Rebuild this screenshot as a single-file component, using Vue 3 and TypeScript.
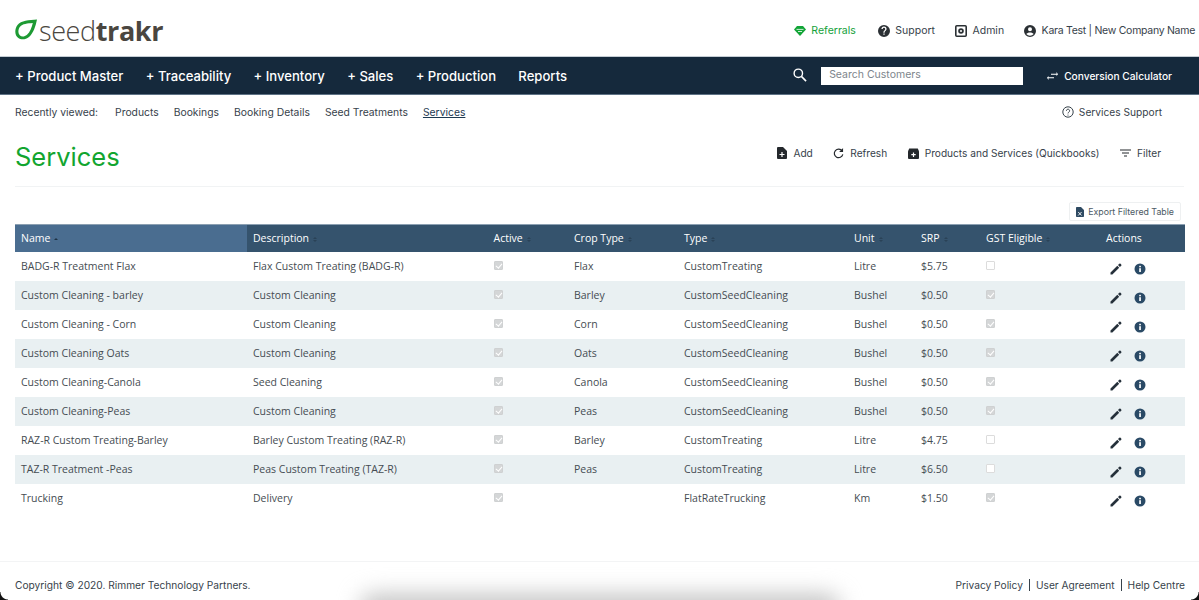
<script setup lang="ts">
interface Row { name: string; desc: string; active: boolean; crop: string; type: string; unit: string; srp: string; gst: boolean }
const rows: Row[] = [
  { name: 'BADG-R Treatment Flax', desc: 'Flax Custom Treating (BADG-R)', active: true, crop: 'Flax', type: 'CustomTreating', unit: 'Litre', srp: '$5.75', gst: false },
  { name: 'Custom Cleaning - barley', desc: 'Custom Cleaning', active: true, crop: 'Barley', type: 'CustomSeedCleaning', unit: 'Bushel', srp: '$0.50', gst: true },
  { name: 'Custom Cleaning - Corn', desc: 'Custom Cleaning', active: true, crop: 'Corn', type: 'CustomSeedCleaning', unit: 'Bushel', srp: '$0.50', gst: true },
  { name: 'Custom Cleaning Oats', desc: 'Custom Cleaning', active: true, crop: 'Oats', type: 'CustomSeedCleaning', unit: 'Bushel', srp: '$0.50', gst: true },
  { name: 'Custom Cleaning-Canola', desc: 'Seed Cleaning', active: true, crop: 'Canola', type: 'CustomSeedCleaning', unit: 'Bushel', srp: '$0.50', gst: true },
  { name: 'Custom Cleaning-Peas', desc: 'Custom Cleaning', active: true, crop: 'Peas', type: 'CustomSeedCleaning', unit: 'Bushel', srp: '$0.50', gst: true },
  { name: 'RAZ-R Custom Treating-Barley', desc: 'Barley Custom Treating (RAZ-R)', active: true, crop: 'Barley', type: 'CustomTreating', unit: 'Litre', srp: '$4.75', gst: false },
  { name: 'TAZ-R Treatment -Peas', desc: 'Peas Custom Treating (TAZ-R)', active: true, crop: 'Peas', type: 'CustomTreating', unit: 'Litre', srp: '$6.50', gst: false },
  { name: 'Trucking', desc: 'Delivery', active: true, crop: '', type: 'FlatRateTrucking', unit: 'Km', srp: '$1.50', gst: true },
]
const navs = ['+ Product Master', '+ Traceability', '+ Inventory', '+ Sales', '+ Production', 'Reports']
const recents = ['Products', 'Bookings', 'Booking Details', 'Seed Treatments']
const cols = [
  { label: 'Name', w: 232, cls: 'sorted' },
  { label: 'Description', w: 240.5, cls: '' },
  { label: 'Active', w: 80.5, cls: '' },
  { label: 'Crop Type', w: 110, cls: '' },
  { label: 'Type', w: 170, cls: '' },
  { label: 'Unit', w: 67, cls: '' },
  { label: 'SRP', w: 65, cls: '' },
  { label: 'GST Eligible', w: 120, cls: '' },
]
</script>

<template>
  <div class="page">
    <header class="top">
      <div class="logo">
        <svg class="leaf" width="24" height="22" viewBox="0 0 24 22">
          <path d="M23 .5 C15 1 7 1.500 3.500 6 C0.500 10 0.500 16 4 18.800 C7 21 11.500 21 15 18 C19.500 14 21.500 7.500 23 .5 Z M18.800 4 C17.800 8.500 16 13 13 15.800 C10.500 18 7.500 18 6 16.500 C4 14.500 3.800 10.500 6 7.800 C8.500 4.800 13.500 4.300 18.800 4 Z" fill="#1d9a33" fill-rule="evenodd" />
        </svg>
        <span class="logo-text"><span class="seed">seed</span><b class="trakr">trakr</b></span>
      </div>
      <div class="top-links">
        <a class="tl green">
          <svg width="12" height="10" viewBox="0 0 12 10"><path d="M3 0h6l3 3.400L6 10 0 3.400z" fill="#12a537" /><path d="M2.500 3.400h7M4 5.500h4" stroke="#fff" stroke-width=".8" /></svg>
          Referrals
        </a>
        <a class="tl">
          <svg width="12" height="12" viewBox="0 0 24 24"><path d="M12 0a12 12 0 1 0 0 24 12 12 0 0 0 0-24zm1.300 19.500h-2.600V17h2.600zm2.600-8.600-1.100 1.200c-.9.900-1.500 1.600-1.500 3.400h-2.600v-.6c0-1.400.6-2.600 1.500-3.500l1.600-1.600c.5-.4.700-1 .7-1.700a2.500 2.500 0 0 0-5 0H6.900a5.100 5.100 0 0 1 10.200 0c0 1.100-.5 2.100-1.200 2.800z" fill="#2b3034" /></svg>
          Support
        </a>
        <a class="tl">
          <svg width="12" height="12" viewBox="0 0 12 12"><rect x=".8" y=".8" width="10.400" height="10.400" rx="1" fill="none" stroke="#2b3034" stroke-width="1.600" /><circle cx="6" cy="6" r="2.800" fill="#2b3034" /><circle cx="6" cy="6" r="1" fill="#fff" /></svg>
          Admin
        </a>
        <a class="tl user">
          <svg width="12" height="12" viewBox="0 0 24 24"><path d="M12 0a12 12 0 1 0 0 24 12 12 0 0 0 0-24zm0 4.500a4 4 0 1 1 0 8 4 4 0 0 1 0-8zm0 17a9.400 9.400 0 0 1-7.400-3.600c1-2 4.400-3.100 7.400-3.100s6.400 1.100 7.400 3.100A9.400 9.400 0 0 1 12 21.500z" fill="#2b3034" /></svg>
          Kara Test | New Company Name
        </a>
      </div>
    </header>

    <nav class="nav">
      <div class="nav-items">
        <a v-for="n in navs" :key="n" class="nav-item">{{ n }}</a>
      </div>
      <div class="nav-right">
        <svg class="search-ic" width="14" height="14" viewBox="0 0 15 15"><circle cx="5.700" cy="5.700" r="4.500" fill="none" stroke="#fff" stroke-width="1.500" /><path d="M9 9l5 5" stroke="#fff" stroke-width="1.700" /></svg>
        <div class="search">Search Customers</div>
        <a class="conv">
          <svg width="11" height="8" viewBox="0 0 11 8"><path d="M4 1.800h5.500V0L11 2.200 9.500 4V2.800H4zM7 5.200H1.500V4L0 5.800 1.500 8V6.200H7z" fill="#fff" /></svg>
          Conversion Calculator
        </a>
      </div>
    </nav>

    <div class="sub">
      <div class="sub-left">
        <span class="rv">Recently viewed:</span>
        <a v-for="r in recents" :key="r">{{ r }}</a>
        <a class="current">Services</a>
      </div>
      <a class="sub-support">
        <svg width="12" height="12" viewBox="0 0 12 12"><circle cx="6" cy="6" r="5.200" fill="none" stroke="#37424b" stroke-width="1" /><path d="M4.400 4.800a1.600 1.600 0 1 1 2.500 1.300c-.6.400-.9.700-.9 1.300" fill="none" stroke="#37424b" /><circle cx="6" cy="9" r=".6" fill="#37424b" /></svg>
        Services Support
      </a>
    </div>

    <div class="title-row">
      <h1>Services</h1>
      <div class="actions">
        <a>
          <svg width="10" height="12" viewBox="0 0 10 12"><path d="M0 1a1 1 0 0 1 1-1h5l4 4v7a1 1 0 0 1-1 1H1a1 1 0 0 1-1-1z" fill="#24282c" /><path d="M5 5v5M2.500 7.500h5" stroke="#fff" stroke-width="1.200" /></svg>
          Add
        </a>
        <a>
          <svg width="11" height="11" viewBox="0 0 12 12"><path d="M10 3.200A4.700 4.700 0 1 0 10.700 7" fill="none" stroke="#24282c" stroke-width="1.300" /><path d="M11 0v4.300H6.700z" fill="#24282c" /></svg>
          Refresh
        </a>
        <a>
          <svg width="11" height="11" viewBox="0 0 11 11"><path d="M0 3.200 1.200.6h8.600L11 3.200V10a1 1 0 0 1-1 1H1a1 1 0 0 1-1-1z" fill="#24282c" /><path d="M5.500 4.500v4.500M3.300 6.700h4.400" stroke="#fff" stroke-width="1.200" /></svg>
          Products and Services (Quickbooks)
        </a>
        <a>
          <svg width="11" height="8" viewBox="0 0 11 8"><path d="M0 1h11M2 4h7M4 7h3" stroke="#24282c" stroke-width="1.100" /></svg>
          Filter
        </a>
      </div>
    </div>

    <main class="content">
      <div class="export-row">
        <button class="export">
          <svg width="8" height="10" viewBox="0 0 8 10"><path d="M0 .8A.8.8 0 0 1 .8 0H5l3 3v6.200a.8.8 0 0 1-.8.8H.8a.8.8 0 0 1-.8-.8z" fill="#2e4a62" /><path d="M2.200 5l3.400 3.500M5.600 5 2.200 8.500" stroke="#fff" stroke-width=".9" /></svg>
          Export Filtered Table
        </button>
      </div>
      <table class="tbl">
        <colgroup>
          <col v-for="c in cols" :key="c.label" :style="{ width: c.w + 'px' }" />
          <col />
        </colgroup>
        <thead>
          <tr>
            <th v-for="c in cols" :key="c.label" :class="c.cls">
              {{ c.label }}<span class="sort"><i class="tri up" :class="{ on: c.cls }"></i><i v-if="!c.cls" class="tri down"></i></span>
            </th>
            <th class="act-h">Actions</th>
          </tr>
        </thead>
        <tbody>
          <tr v-for="r in rows" :key="r.name">
            <td>{{ r.name }}</td>
            <td>{{ r.desc }}</td>
            <td><span class="cb checked"></span></td>
            <td>{{ r.crop }}</td>
            <td>{{ r.type }}</td>
            <td>{{ r.unit }}</td>
            <td>{{ r.srp }}</td>
            <td><span class="cb" :class="{ checked: r.gst }"></span></td>
            <td class="act">
              <svg width="12" height="12" viewBox="0 0 12 12"><path d="M.5 11.500V9.600L7.300 2.800 9.200 4.700 2.400 11.500zM8 2.100 9.300.8a.9.9 0 0 1 1.300 0l.6.6a.9.9 0 0 1 0 1.300L9.900 4z" fill="#25303a" /></svg>
              <svg width="12" height="12" viewBox="0 0 12 12"><circle cx="6" cy="6" r="5.500" fill="#2a4a66" /><rect x="5.200" y="5.200" width="1.700" height="3.800" fill="#fff" /><rect x="5.200" y="2.800" width="1.700" height="1.500" fill="#fff" /></svg>
            </td>
          </tr>
        </tbody>
      </table>
    </main>

    <footer class="foot">
      <span>Copyright © 2020. Rimmer Technology Partners.</span>
      <span class="foot-links"><a>Privacy Policy</a><a>User Agreement</a><a>Help Centre</a></span>
    </footer>
    <div class="glow" aria-hidden="true"></div>
    <div class="corner left" aria-hidden="true"></div>
    <div class="corner right" aria-hidden="true"></div>
  </div>
</template>

<style>
html, body { margin: 0; background: #fff; overflow: hidden; }
</style>

<style scoped>
.page { position: relative; width: 1199px; height: 600px; overflow: hidden; display: flex; flex-direction: column; background: #fff; font-family: Inter, "Liberation Sans", sans-serif; color: #37424b; font-size: 10.300px; }
.top { height: 57px; flex: none; box-sizing: border-box; padding: 5px 4px 0 15px; display: flex; justify-content: space-between; align-items: center; border-bottom: 1px solid #c5cdd4; }
.logo { display: flex; align-items: center; gap: 1px; }
.leaf { margin-top: -2px; margin-left: -1px; }
.logo-text { font-family: "Open Sans", sans-serif; font-size: 27px; line-height: 30px; color: #4a4640; letter-spacing: -.4px; }
.seed { font-weight: 300; }
.trakr { font-weight: 700; }
.top-links { display: flex; gap: 20px; }
.tl { display: flex; align-items: center; gap: 5.500px; color: #37424b; font-size: 10.500px; }
.tl.green { color: #13a23a; margin-right: 2px; }
.tl.user { letter-spacing: -.28px; }
.nav { height: 38px; flex: none; box-sizing: border-box; background: #15293c; border-bottom: 1px solid #5e7285; display: flex; justify-content: space-between; align-items: center; padding: 0 27px 0 15px; }
.nav-items { display: flex; gap: 22.300px; }
.nav-item { color: #fff; font-size: 13.100px; font-weight: 500; }
.nav-right { display: flex; align-items: center; }
.search-ic { margin-right: 14px; margin-top: -2px; }
.search { width: 202px; height: 18px; box-sizing: border-box; background: #fff; color: #7d858c; font-size: 10.500px; line-height: 16px; padding-left: 8px; margin-right: 24px; }
.conv { color: #fff; font-size: 10.200px; font-weight: 500; display: flex; align-items: center; gap: 6px; }
.sub { height: 34px; flex: none; display: flex; justify-content: space-between; align-items: center; padding: 0 37px 0 15px; font-size: 10.350px; }
.sub-left { display: flex; gap: 15px; align-items: center; }
.rv { margin-right: 2px; }
.current { text-decoration: underline; color: #1e3a52; }
.sub-support { display: flex; align-items: center; gap: 5px; font-size: 10.200px; }
.title-row { height: 58px; flex: none; box-sizing: border-box; margin: 0 15px; border-bottom: 1px solid #f1f3f4; display: flex; justify-content: space-between; align-items: flex-start; padding-top: 8px; }
h1 { margin: 0; font-size: 25.500px; font-weight: 400; line-height: 40px; color: #12a52f; }
.actions { display: flex; gap: 20.500px; padding: 10px 23px 0 0; font-size: 10.150px; color: #37424b; }
.actions a { display: flex; align-items: center; gap: 6px; }
.content { flex: 1; margin: 0 14px 0 15px; min-height: 0; }
.export-row { display: flex; justify-content: flex-end; padding: 15px 4px 3px 0; }
.export { display: flex; align-items: center; gap: 4px; height: 19px; box-sizing: border-box; padding: 0 6px; border: 1px solid #eef0f1; border-radius: 2px; background: #fff; color: #4d5a65; font: 8.800px Inter, "Liberation Sans", sans-serif; }
.tbl { width: 1170px; table-layout: fixed; border-collapse: collapse; font-family: "Open Sans", sans-serif; font-size: 10.500px; color: #454c52; }
th { height: 27px; box-sizing: border-box; padding: 0 6px; background: #35536d; color: #fff; font-weight: 500; text-align: left; border-top: 1px solid #8ca0b2; white-space: nowrap; }
th.sorted { background: #4a6d90; }
.sort { display: inline-flex; flex-direction: column; gap: 1px; margin-left: 4px; vertical-align: middle; }
.tri { display: block; width: 0; height: 0; border-left: 2.500px solid transparent; border-right: 2.500px solid transparent; }
.tri.up { border-bottom: 2.500px solid #2a4257; }
.tri.up.on { border-bottom-color: #1e3244; }
.tri.down { border-top: 2.500px solid #2a4257; }
td { height: 29px; box-sizing: border-box; padding: 0 6px; white-space: nowrap; }
tbody tr:nth-child(even) td { background: #e9f0f2; }
.cb { display: block; width: 9px; height: 9px; box-sizing: border-box; margin-top: -1px; border-radius: 1px; border: 1px solid #dcdcdc; background: #fff; position: relative; }
.cb.checked { background: #d4d6d7; border-color: #cfd1d2; }
.cb.checked::after { content: ""; position: absolute; left: 2px; top: 0; width: 2.500px; height: 5px; border: solid #fff; border-width: 0 1.200px 1.200px 0; transform: rotate(40deg); }
.act { padding-left: 10px; }
.act svg { vertical-align: -6px; }
.act svg:first-child { margin-right: 12px; }
.foot { height: 39px; flex: none; box-sizing: border-box; padding: 8px 14px 0 15px; display: flex; justify-content: space-between; align-items: center; border-top: 1px solid #f3f4f5; font-size: 10.200px; position: relative; z-index: 1; }
.foot-links a + a { border-left: 1px solid #37424b; margin-left: 6px; padding-left: 6px; }
.glow { position: absolute; left: 360px; width: 480px; bottom: -22px; height: 28px; background: #c4c4c4; filter: blur(11px); border-radius: 20px; }
.corner { position: absolute; bottom: 0; width: 8px; height: 8px; z-index: 2; }
.corner.left { left: 0; background: radial-gradient(circle at 100% 0, transparent 7px, #111 8px); }
.corner.right { right: 0; background: radial-gradient(circle at 0 0, transparent 7px, #111 8px); }
</style>
